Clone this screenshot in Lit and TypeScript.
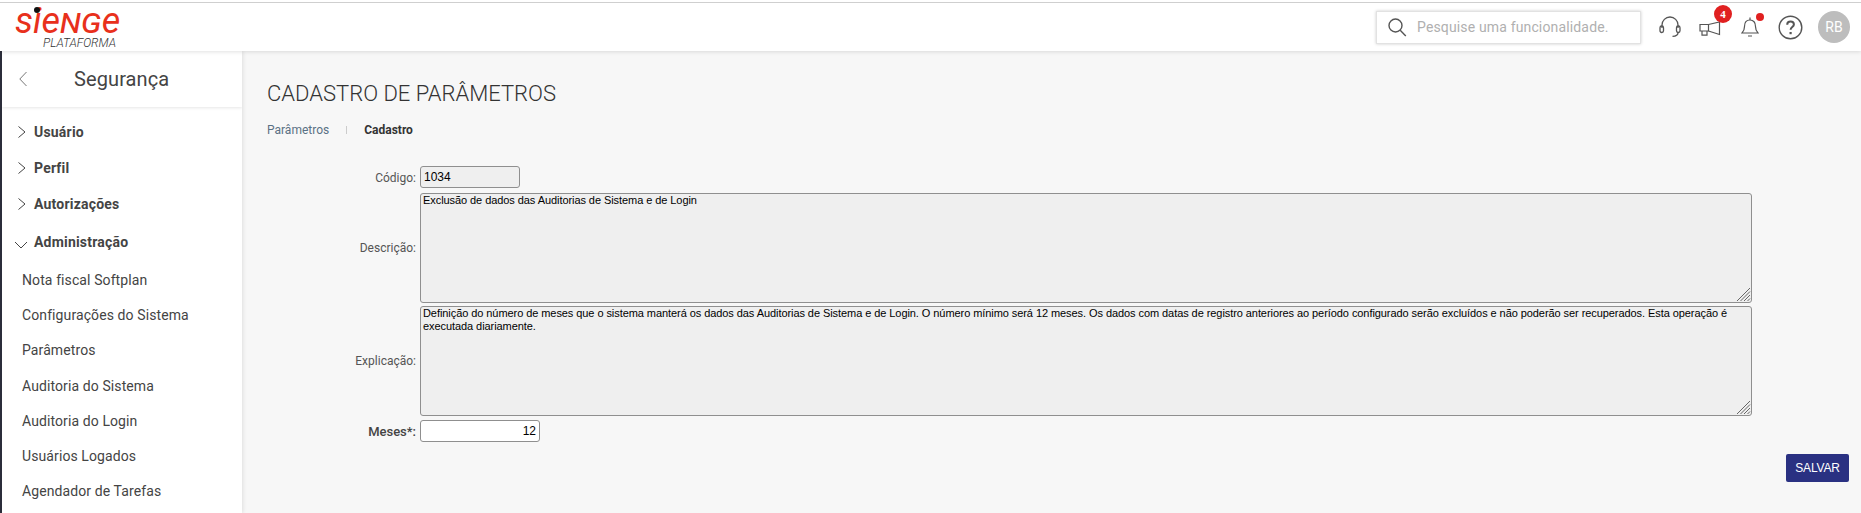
import { LitElement, html, css } from "lit";
import { customElement } from "lit/decorators.js";

const groups = ["Usuário", "Perfil", "Autorizações"];
const items = [
  "Nota fiscal Softplan",
  "Configurações do Sistema",
  "Parâmetros",
  "Auditoria do Sistema",
  "Auditoria do Login",
  "Usuários Logados",
  "Agendador de Tarefas",
];

const explanation =
  "Definição do número de meses que o sistema manterá os dados das Auditorias de Sistema e de Login. O número mínimo será 12 meses. Os dados com datas de registro anteriores ao período configurado serão excluídos e não poderão ser recuperados. Esta operação é executada diariamente.";

@customElement("app-root")
export class AppRoot extends LitElement {
  static styles = css`
    :host {
      display: block;
      height: 513px;
      overflow: hidden;
      background: #f7f7f7;
      font-family: Roboto, "Liberation Sans", sans-serif;
      color: #444;
    }
    .top {
      background: #fff;
      padding-top: 2px;
      box-shadow: 0 1px 4px rgba(0, 0, 0, 0.12);
      position: relative;
      z-index: 2;
    }
    .header {
      box-sizing: border-box;
      height: 49px;
      border-top: 1px solid #cfcfcf;
      background: #fff;
      display: flex;
      align-items: center;
      padding: 0 11px 0 15px;
    }
    .logo {
      position: relative;
      width: 105px;
      height: 46px;
      flex: none;
      color: #e8301c;
    }
    .logo-word {
      font-style: italic;
      font-weight: 400;
      font-size: 36px;
      line-height: 28px;
      letter-spacing: 0;
      position: absolute;
      left: 0;
      top: 3px;
      white-space: nowrap;
    }
    .logo-caps {
      font-variant: small-caps;
      text-transform: lowercase;
    }
    .logo-dot {
      position: absolute;
      left: 19px;
      top: 3px;
      width: 6px;
      height: 6px;
      border-radius: 50%;
      background: #111;
    }
    .logo-sub {
      position: absolute;
      left: 28px;
      top: 33px;
      font-size: 12px;
      line-height: 13px;
      font-style: italic;
      font-weight: 300;
      color: #333;
    }
    .spacer {
      flex: 1;
    }
    .search {
      box-sizing: border-box;
      width: 265px;
      height: 33px;
      background: #fff;
      border: 1px solid #e2e2e2;
      box-shadow: 0 0 3px rgba(0, 0, 0, 0.2);
      display: flex;
      align-items: center;
      gap: 10px;
      padding-left: 10px;
      font-size: 14px;
      letter-spacing: 0.15px;
      color: #b0b0b0;
      margin-right: 16px;
    }
    .icon {
      position: relative;
      width: 26px;
      height: 28px;
      margin-right: 14px;
      display: flex;
      align-items: center;
      justify-content: center;
    }
    svg {
      display: block;
    }
    .megaphone {
      margin-top: 3px;
    }
    .badge {
      position: absolute;
      left: 17px;
      top: -8px;
      width: 18px;
      height: 18px;
      border-radius: 50%;
      background: #e02020;
      color: #fff;
      font: bold 11px/18px "Liberation Serif", serif;
      text-align: center;
    }
    .dot {
      position: absolute;
      left: 19px;
      top: 0;
      width: 8px;
      height: 8px;
      border-radius: 50%;
      background: #e02020;
    }
    .avatar {
      width: 32px;
      height: 32px;
      border-radius: 50%;
      background: #bdbdbd;
      color: #fff;
      font-size: 14px;
      line-height: 32px;
      text-align: center;
      margin-left: 1px;
    }
    .body {
      display: grid;
      grid-template-columns: 242px 1fr;
      height: 462px;
    }
    .side {
      box-sizing: border-box;
      background: #fff;
      border-left: 2px solid #2b2d3a;
      box-shadow: 1px 0 4px rgba(0, 0, 0, 0.1);
      overflow: hidden;
    }
    .side-head {
      height: 56px;
      display: flex;
      align-items: center;
      padding-left: 17px;
      gap: 47px;
      font-size: 20px;
      letter-spacing: 0.1px;
      box-shadow: 0 1px 3px rgba(0, 0, 0, 0.1);
    }
    .groups {
      padding-top: 7px;
    }
    .group {
      height: 36px;
      display: flex;
      align-items: center;
      gap: 7px;
      padding-left: 15px;
      font-size: 14px;
      font-weight: 700;
      letter-spacing: 0.2px;
    }
    .group.open {
      height: 40px;
      padding-left: 12px;
      gap: 6px;
    }
    .group.open svg {
      margin-top: 5px;
    }
    .items {
      padding-top: 1px;
    }
    .item {
      height: 35.2px;
      line-height: 35.2px;
      padding-left: 20px;
      font-size: 14px;
      letter-spacing: 0.1px;
      white-space: nowrap;
    }
    .main {
      padding: 28px 12px 0 25px;
      min-width: 0;
    }
    h1 {
      margin: 0;
      font-size: 22px;
      font-weight: 300;
      line-height: 30px;
      color: #333;
    }
    .crumbs {
      display: flex;
      align-items: center;
      margin-top: 13px;
      font-size: 12px;
      height: 16px;
    }
    .crumb-link {
      color: #5a7184;
    }
    .crumb-sep {
      width: 1px;
      height: 8px;
      background: #ccc;
      margin: 0 17px 0 17px;
    }
    .crumb-now {
      font-weight: 700;
      color: #333;
    }
    .form {
      display: grid;
      grid-template-columns: 149px 1fr;
      column-gap: 4px;
      row-gap: 3px;
      align-items: center;
      margin-top: 28px;
      margin-right: 97px;
    }
    label {
      text-align: right;
      font-size: 12px;
      color: #555;
    }
    label.req {
      font-size: 13px;
      font-weight: 500;
      color: #444;
      margin-top: 1px;
    }
    input,
    textarea {
      box-sizing: border-box;
      display: block;
      font-family: "Liberation Sans", Arial, sans-serif;
      color: #000;
      border: 1px solid #8f8f8f;
      border-radius: 3px;
      margin: 0;
      outline: none;
    }
    input {
      height: 22px;
      font-size: 12px;
      padding: 0 3px;
    }
    .area {
      position: relative;
      height: 110px;
    }
    textarea {
      width: 100%;
      height: 110px;
      background: #efefef;
      font-size: 11px;
      line-height: 13px;
      letter-spacing: -0.07px;
      padding: 0 2px;
      resize: none;
    }
    .grip {
      position: absolute;
      right: 1px;
      bottom: 1px;
    }
    .code {
      width: 100px;
      background: #efefef;
      margin-bottom: 2px;
    }
    .months {
      width: 120px;
      background: #fff;
      text-align: right;
      padding-right: 3px;
      margin-top: 1px;
    }
    .actions {
      display: flex;
      justify-content: flex-end;
      margin-top: 12px;
    }
    button {
      width: 63px;
      height: 28px;
      border: none;
      border-radius: 2px;
      background: #2a3182;
      color: #fff;
      font: 12px "Liberation Sans", Arial, sans-serif;
      letter-spacing: -0.2px;
      padding: 0;
    }
  `;

  private chevronRight() {
    return html`<svg width="10" height="14" viewBox="0 0 10 14" fill="none" stroke="#444" stroke-width="1">
      <path d="M1.500 1.500l6.500 5.500-6.500 5.500" />
    </svg>`;
  }

  private area(text: string) {
    return html`<div class="area">
      <textarea readonly .value=${text}></textarea>
      <svg class="grip" width="15" height="15" viewBox="0 0 15 15" stroke="#666" stroke-width="1">
        <path d="M14 1L1 14M14 4.500L4.500 14M14 8L8 14M14 11.500L11.500 14" />
      </svg>
    </div>`;
  }

  render() {
    return html`
      <div class="top">
        <div class="header">
          <div class="logo">
            <span class="logo-word">sie<span class="logo-caps">NG</span>e</span>
            <span class="logo-dot"></span>
            <span class="logo-sub">PLATAFORMA</span>
          </div>
          <div class="spacer"></div>
          <div class="search">
            <svg width="20" height="20" viewBox="0 0 20 20" fill="none" stroke="#555" stroke-width="1.4">
              <circle cx="8.500" cy="8.500" r="6.500" />
              <path d="M13.200 13.200l5.600 5.800" />
            </svg>
            <span>Pesquise uma funcionalidade.</span>
          </div>
          <div class="icon">
            <svg width="22" height="22" viewBox="0 0 22 22" fill="none" stroke="#555" stroke-width="1.3">
              <path d="M3 12V9a8 8 0 0 1 16 0v3" />
              <rect x="1" y="10" width="3.500" height="6.500" rx="1.700" />
              <rect x="17.500" y="10" width="3.500" height="6.500" rx="1.700" />
              <path d="M19 16.500c0 2.500-2.500 3.800-5.500 3.800" />
            </svg>
          </div>
          <div class="icon">
            <svg class="megaphone" width="22" height="15" viewBox="0 0 22 15" fill="none" stroke="#555" stroke-width="1.200">
              <path d="M1 3.500h8.500v6.500H1z" />
              <path d="M9.500 3.500L20.500 1v12.500L9.500 10" />
              <path d="M3 10v4.200h5V10" />
            </svg>
            <span class="badge">4</span>
          </div>
          <div class="icon">
            <svg width="18" height="22" viewBox="0 0 18 22" fill="none" stroke="#555" stroke-width="1.2">
              <path d="M1 17h16c-1.500-1.500-2.500-3-2.500-6.500C14.500 6.500 12.500 4 9 4S3.500 6.500 3.500 10.500C3.500 14 2.500 15.500 1 17z" />
              <path d="M9 1.500V4M7 20h4" />
            </svg>
            <span class="dot"></span>
          </div>
          <div class="icon">
            <svg width="25" height="25" viewBox="0 0 25 25" fill="none" stroke="#555" stroke-width="1.4">
              <circle cx="12.500" cy="12.500" r="11.300" />
              <path d="M9.200 9.800c0-2 1.500-3.200 3.400-3.200 2 0 3.300 1.300 3.300 2.900 0 2.500-3.300 2.600-3.300 5.200" stroke-width="2" />
              <path d="M12.600 17v2.200" stroke-width="2.200" />
            </svg>
          </div>
          <div class="avatar">RB</div>
        </div>
      </div>
      <div class="body">
        <nav class="side">
          <div class="side-head">
            <svg width="8" height="16" viewBox="0 0 8 16" fill="none" stroke="#777" stroke-width="1">
              <path d="M7.500 1L.8 8l6.700 7" />
            </svg>
            <span>Segurança</span>
          </div>
          <div class="groups">
            ${groups.map(
              (g) => html`<div class="group">${this.chevronRight()}<span>${g}</span></div>`
            )}
            <div class="group open">
              <svg width="14" height="8" viewBox="0 0 14 8" fill="none" stroke="#444" stroke-width="1">
                <path d="M1 1l6 6 6-6" />
              </svg>
              <span>Administração</span>
            </div>
            <div class="items">
              ${items.map((i) => html`<div class="item">${i}</div>`)}
            </div>
          </div>
        </nav>
        <main class="main">
          <h1>CADASTRO DE PARÂMETROS</h1>
          <div class="crumbs">
            <span class="crumb-link">Parâmetros</span>
            <span class="crumb-sep"></span>
            <span class="crumb-now">Cadastro</span>
          </div>
          <div class="form">
            <label>Código:</label>
            <input class="code" readonly .value=${"1034"} />
            <label>Descrição:</label>
            ${this.area("Exclusão de dados das Auditorias de Sistema e de Login")}
            <label>Explicação:</label>
            ${this.area(explanation)}
            <label class="req">Meses*:</label>
            <input class="months" .value=${"12"} />
          </div>
          <div class="actions"><button>SALVAR</button></div>
        </main>
      </div>
    `;
  }
}
